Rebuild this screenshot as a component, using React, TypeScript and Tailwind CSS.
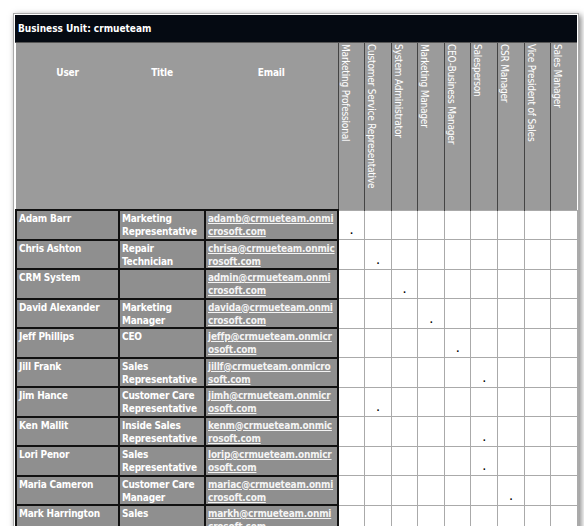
const roles = ["Marketing Professional","Customer Service Representative","System Administrator","Marketing Manager","CEO-Business Manager","Salesperson","CSR Manager","Vice President of Sales","Sales Manager"];
const rows: [string,string,string,string,number][] = [
["Adam Barr","Marketing Representative","adamb@crmueteam.onmi","crosoft.com",0],
["Chris Ashton","Repair Technician","chrisa@crmueteam.onmic","rosoft.com",1],
["CRM System","","admin@crmueteam.onmi","crosoft.com",2],
["David Alexander","Marketing Manager","davida@crmueteam.onmi","crosoft.com",3],
["Jeff Phillips","CEO","jeffp@crmueteam.onmicr","osoft.com",4],
["Jill Frank","Sales Representative","jillf@crmueteam.onmicro","soft.com",5],
["Jim Hance","Customer Care Representative","jimh@crmueteam.onmicr","osoft.com",1],
["Ken Mallit","Inside Sales Representative","kenm@crmueteam.onmic","rosoft.com",5],
["Lori Penor","Sales Representative","lorip@crmueteam.onmicr","osoft.com",5],
["Maria Cameron","Customer Care Manager","mariac@crmueteam.onmi","crosoft.com",6],
["Mark Harrington","Sales","markh@crmueteam.onmi","crosoft.com",-1],
];
export default function App(){
  return (
    <div className="w-[584px] h-[526px] bg-white overflow-hidden pt-[13px] pl-[13px]" style={{fontFamily:'"DejaVu Sans Condensed","DejaVu Sans",sans-serif'}}>
      <div className="w-[566px] h-[520px] bg-white border border-[#aaa] shadow-[2px_2px_6px_rgba(0,0,0,0.5)] p-[1px] overflow-hidden">
        <div className="bg-[#050a12] text-white text-[10px] font-bold h-[28px] flex items-center pl-[3px] border-b border-[#555]">Business Unit: crmueteam</div>
        <table className="w-[562px] border-collapse table-fixed text-[10px] font-bold text-white leading-[13px] tracking-[-0.2px]">
          <colgroup><col className="w-[103px]"/><col className="w-[86px]"/><col className="w-[133px]"/>{roles.map(r=><col key={r} className="w-[26.6px]"/>)}</colgroup>
          <thead><tr className="h-[167px] bg-[#9b9b9b]">
            <th className="align-top pt-[23px] font-bold">User</th>
            <th className="align-top pt-[23px] font-bold">Title</th>
            <th className="align-top pt-[23px] font-bold">Email</th>
            {roles.map(r=><th key={r} className="border-l border-[#444] align-top p-0 pt-[1px]"><div className="[writing-mode:vertical-rl] font-normal text-[10px] whitespace-nowrap mx-auto leading-[13px]">{r}</div></th>)}
          </tr></thead>
          <tbody>
            {rows.map(([n,t,e1,e2,d],i)=>(
              <tr key={i} className="h-[29.5px]">
                <td className="bg-[#8f8f8f] border-2 border-[#111] align-top px-[2px] pt-[1px] whitespace-nowrap overflow-hidden">{n}</td>
                <td className="bg-[#8f8f8f] border-2 border-[#111] align-top px-[2px] pt-[1px]">{t}</td>
                <td className="bg-[#8f8f8f] border-2 border-[#111] align-top px-[2px] pt-[1px] underline whitespace-nowrap overflow-hidden text-[#f4f4f4]">{e1}<br/>{e2}</td>
                {roles.map((r,j)=><td key={r} className="bg-white border border-[#aaa] align-bottom text-center text-black text-[9px] leading-[12px]">{j===d?"·":""}</td>)}
              </tr>
            ))}
          </tbody>
        </table>
      </div>
    </div>
  );
}
